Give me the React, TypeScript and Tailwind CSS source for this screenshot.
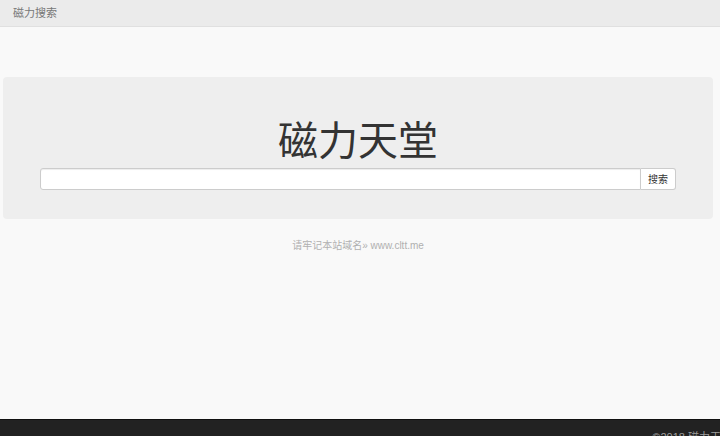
import React from "react";

const font = "font-['Liberation_Sans','Noto_Sans_CJK_SC',sans-serif]";

export default function App() {
  return (
    <div className={`${font} w-[720px] overflow-hidden`}>
      {/* top bar */}
      <nav className="h-[27px] bg-[#ebebeb] border-b border-[#e0e0e0] px-[13px] flex items-center text-[11px] text-[#777]">
        磁力搜索
      </nav>

      <main className="h-[392px] bg-[#f9f9f9] pl-[3px] pr-[7px] pt-[50px]">
        <section className="h-[142px] rounded-[4px] bg-[#eeeeee] flex flex-col items-center pt-[42px]">
          <h1 className="text-[40px] leading-[44px] text-[#333] font-normal">磁力天堂</h1>
          <form className="mt-[5px] flex w-[636px]" onSubmit={(e) => e.preventDefault()}>
            <input
              className="h-[22px] flex-1 bg-white border border-[#ccc] rounded-l-[3px] shadow-[inset_0_1px_1px_rgba(0,0,0,0.075)] outline-none px-2 text-[11px]"
              type="text"
            />
            <button className="h-[22px] w-[35px] bg-white border border-l-0 border-[#ccc] rounded-r-[3px] text-[10px] text-[#333]">
              搜索
            </button>
          </form>
        </section>
        <p className="mt-[21px] text-center text-[10px] leading-[12px] text-[#b0b0b0]">
          请牢记本站域名» www.cltt.me
        </p>
      </main>

      <footer className="h-[40px] bg-[#222] border-t border-[#111] flex justify-end pt-[9px] overflow-hidden">
        <span className="-mr-[12px] whitespace-nowrap text-[11px] text-[#9d9d9d]">©2018 磁力天堂</span>
      </footer>
    </div>
  );
}
